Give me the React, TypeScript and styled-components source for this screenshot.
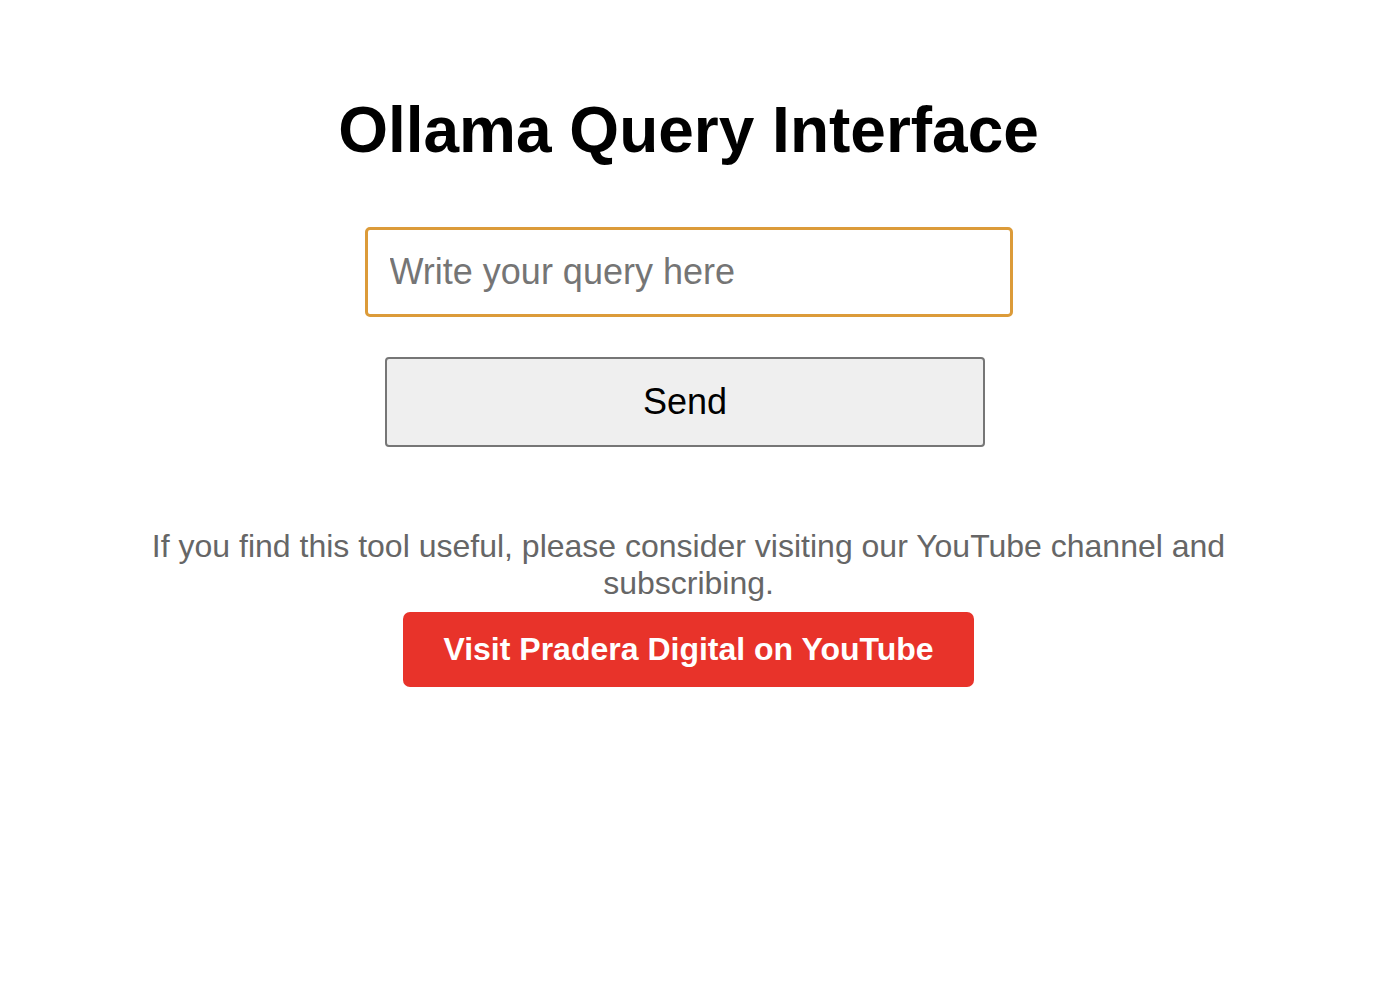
import React from 'react';
import styled, { createGlobalStyle } from 'styled-components';

const GlobalStyle = createGlobalStyle`
  html, body {
    margin: 0;
    padding: 0;
    background: #ffffff;
    font-family: "Liberation Sans", Arial, Helvetica, sans-serif;
  }
`;

const Page = styled.main`
  display: flex;
  flex-direction: column;
  align-items: center;
  padding: 93px 15px 0 0;
  text-align: center;
`;

const Title = styled.h1`
  margin: 0 0 60px;
  font-size: 64px;
  font-weight: 700;
  color: #000;
`;

const QueryForm = styled.form`
  display: flex;
  flex-direction: column;
  align-items: center;
  gap: 40px;
`;

const QueryInput = styled.input`
  box-sizing: border-box;
  width: 648px;
  height: 90px;
  padding: 0 22px;
  border: 3px solid #dc9b39;
  border-radius: 5px;
  outline: none;
  font-family: inherit;
  font-size: 36px;
  color: #000;
  background: #fff;

  &::placeholder {
    color: #757575;
  }
`;

const SendButton = styled.button`
  box-sizing: border-box;
  width: 600px;
  height: 90px;
  margin-right: 7px;
  border: 2px solid #767676;
  border-radius: 4px;
  background: #efefef;
  font-family: inherit;
  font-size: 36px;
  color: #000;
  cursor: pointer;
`;

const Footer = styled.section`
  display: flex;
  flex-direction: column;
  align-items: center;
  gap: 10px;
  margin-top: 81px;
`;

const Note = styled.p`
  max-width: 1120px;
  margin: 0;
  font-size: 32px;
  color: #666666;
`;

const YouTubeLink = styled.a`
  display: inline-block;
  padding: 19px 40px;
  border-radius: 7px;
  background: #e8332a;
  color: #ffffff;
  font-size: 32px;
  font-weight: 700;
  text-decoration: none;
`;

const App: React.FC = () => {
  return (
    <>
      <GlobalStyle />
      <Page>
        <Title>Ollama Query Interface</Title>
        <QueryForm onSubmit={(e) => e.preventDefault()}>
          <QueryInput type="text" placeholder="Write your query here" />
          <SendButton type="submit">Send</SendButton>
        </QueryForm>
        <Footer>
          <Note>
            If you find this tool useful, please consider visiting our YouTube channel and subscribing.
          </Note>
          <YouTubeLink href="#">Visit Pradera Digital on YouTube</YouTubeLink>
        </Footer>
      </Page>
    </>
  );
};

export default App;
